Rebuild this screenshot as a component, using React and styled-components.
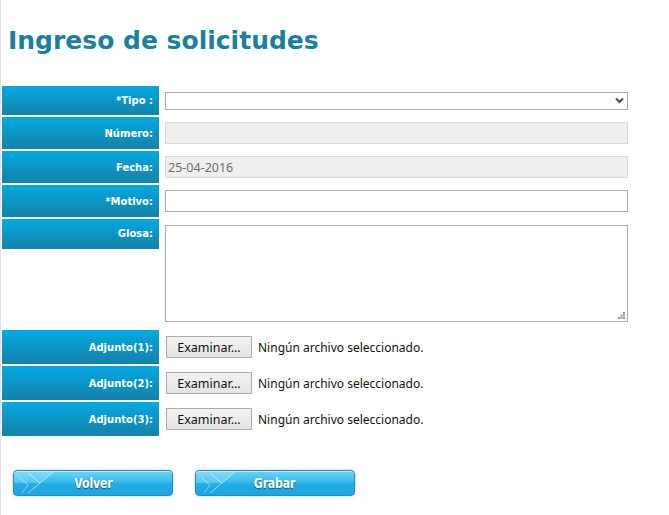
import { Fragment } from 'react';
import styled, { createGlobalStyle } from 'styled-components';

const GlobalStyle = createGlobalStyle`
	html, body {
		margin: 0;
		padding: 0;
		background: #ffffff;
	}
	body {
		font-family: 'DejaVu Sans', Verdana, sans-serif;
	}
`;

const Page = styled.div`
	min-height: 515px;
	box-sizing: border-box;
	border-left: 1px solid #e2e2e2;
	padding-top: 26px;
`;

const Title = styled.h1`
	margin: 0 0 29px 7px;
	font-family: 'DejaVu Sans', Verdana, sans-serif;
	font-weight: bold;
	font-size: 25px;
	line-height: 29px;
	color: #1a7fa1;
`;

const FormGrid = styled.div`
	display: grid;
	grid-template-columns: 157px 471px;
	grid-template-rows: 29px 32px 32px 32px 109px 34px 34px 34px;
	gap: 2px;
	padding: 2px 2px 2px 1px;
	width: max-content;
`;

const Label = styled.div`
	display: flex;
	justify-content: flex-end;
	align-items: ${(p) => (p.$top ? 'flex-start' : 'center')};
	padding-right: 6px;
	line-height: ${(p) => (p.$top ? '30px' : 'normal')};
	background-image: linear-gradient(#03a9e2, #1582a8);
	background-repeat: no-repeat;
	background-size: ${(p) => (p.$top ? '100% 30px' : '100% 100%')};
	color: #ffffff;
	font-family: 'DejaVu Sans', Verdana, sans-serif;
	font-weight: bold;
	font-size: 10px;
	white-space: nowrap;
`;

const Field = styled.div`
	display: flex;
	align-items: ${(p) => (p.$top ? 'flex-start' : 'center')};
	padding: ${(p) => (p.$top ? '6px 4px 0 4px' : '0 4px')};
	gap: 6px;
	font-family: 'Noto Sans', 'Open Sans', sans-serif;
	font-size: 12px;
`;

const SelectWrap = styled.div`
	position: relative;
	width: 463px;
	height: 18px;
`;

const Select = styled.select`
	appearance: none;
	box-sizing: border-box;
	width: 100%;
	height: 100%;
	margin: 0;
	border: 1px solid #a9a9a9;
	background: #ffffff;
	border-radius: 0;
	outline: none;
`;

const Chevron = styled.svg`
	position: absolute;
	right: 4px;
	top: 5px;
	pointer-events: none;
`;

const TextInput = styled.input`
	box-sizing: border-box;
	width: 463px;
	height: 22px;
	margin: 0;
	padding: 0 2px;
	border: 1px solid ${(p) => (p.disabled ? '#d8d8d8' : '#a9a9a9')};
	background: ${(p) => (p.disabled ? '#efefef' : '#ffffff')};
	color: #6d6d6d;
	font-family: 'Noto Sans', 'Open Sans', sans-serif;
	font-size: 12.5px;
	outline: none;
`;

const AreaWrap = styled.div`
	position: relative;
	width: 463px;
	height: 97px;
`;

const TextArea = styled.textarea`
	box-sizing: border-box;
	width: 100%;
	height: 100%;
	margin: 0;
	border: 1px solid #a9a9a9;
	resize: none;
	outline: none;
`;

const Grip = styled.svg`
	position: absolute;
	right: 3px;
	bottom: 3px;
	pointer-events: none;
`;

const BrowseButton = styled.button`
	box-sizing: border-box;
	width: 86px;
	height: 22px;
	margin: 0 0 0 1px;
	padding: 0;
	border: 1px solid #adadad;
	background: linear-gradient(#f2f2f2, #e4e4e4);
	color: #111111;
	font-family: 'Noto Sans', 'Open Sans', sans-serif;
	font-size: 12.5px;
`;

const FileName = styled.span`
	color: #111111;
	white-space: nowrap;
`;

const Actions = styled.div`
	display: flex;
	gap: 22px;
	padding: 32px 0 0 12px;
`;

const ActionButton = styled.button`
	position: relative;
	box-sizing: border-box;
	width: 160px;
	height: 26px;
	margin: 0;
	padding: 0;
	border: 1px solid #1b90c6;
	border-radius: 4px;
	background: linear-gradient(#6fd4f6 0%, #35bdee 45%, #22ace4 55%, #1fa6df 100%);
	box-shadow: 0 0 3px rgba(0, 0, 0, 0.25), inset 0 1px 0 rgba(255, 255, 255, 0.5);
	overflow: hidden;
`;

const ButtonText = styled.span`
	display: inline-block;
	transform: scaleX(0.78);
	color: #ffffff;
	font-family: 'DejaVu Sans', sans-serif;
	font-weight: bold;
	font-size: 14px;
	letter-spacing: -0.2px;
	text-shadow: 0 1px 1px rgba(0, 0, 0, 0.45);
`;

const Deco = styled.svg`
	position: absolute;
	left: 0;
	top: 0;
`;

const ButtonDeco = () => (
	<Deco width="48" height="24" viewBox="0 0 48 24">
		<polygon points="0,0 40,0 26,12 0,12" fill="rgba(255,255,255,0.18)" />
		<polyline points="14,2 26,12 14,22" fill="none" stroke="rgba(255,255,255,0.55)" strokeWidth="1" />
		<polyline points="5,6 14,14 8,22" fill="none" stroke="rgba(255,255,255,0.45)" strokeWidth="1" />
		<line x1="26" y1="12" x2="40" y2="0" stroke="rgba(255,255,255,0.55)" strokeWidth="1" />
	</Deco>
);

const files = ['Adjunto(1):', 'Adjunto(2):', 'Adjunto(3):'];

const App = () => {
	return (
		<Page>
			<GlobalStyle />
			<Title>Ingreso de solicitudes</Title>
			<FormGrid>
				<Label>*Tipo :</Label>
				<Field>
					<SelectWrap>
						<Select defaultValue="">
							<option value=""></option>
						</Select>
						<Chevron width="9" height="7" viewBox="0 0 9 7">
							<polyline points="1,1.5 4.5,5 8,1.5" fill="none" stroke="#4a4a4a" strokeWidth="2" />
						</Chevron>
					</SelectWrap>
				</Field>

				<Label>Número:</Label>
				<Field>
					<TextInput disabled defaultValue="" />
				</Field>

				<Label>Fecha:</Label>
				<Field>
					<TextInput disabled defaultValue="25-04-2016" />
				</Field>

				<Label>*Motivo:</Label>
				<Field>
					<TextInput defaultValue="" />
				</Field>

				<Label $top>Glosa:</Label>
				<Field $top>
					<AreaWrap>
						<TextArea />
						<Grip width="7" height="7" viewBox="0 0 7 7">
							<rect x="5" y="0" width="2" height="2" fill="#9a9a9a" />
							<rect x="2.5" y="2.5" width="2" height="2" fill="#9a9a9a" />
							<rect x="5" y="2.5" width="2" height="2" fill="#9a9a9a" />
							<rect x="0" y="5" width="2" height="2" fill="#9a9a9a" />
							<rect x="2.5" y="5" width="2" height="2" fill="#9a9a9a" />
							<rect x="5" y="5" width="2" height="2" fill="#9a9a9a" />
						</Grip>
					</AreaWrap>
				</Field>

				{files.map((name) => (
					<Fragment key={name}>
						<Label>{name}</Label>
						<Field>
							<BrowseButton>Examinar...</BrowseButton>
							<FileName>Ningún archivo seleccionado.</FileName>
						</Field>
					</Fragment>
				))}
			</FormGrid>
			<Actions>
				<ActionButton>
					<ButtonDeco />
					<ButtonText>Volver</ButtonText>
				</ActionButton>
				<ActionButton>
					<ButtonDeco />
					<ButtonText>Grabar</ButtonText>
				</ActionButton>
			</Actions>
		</Page>
	);
};

export default App;
